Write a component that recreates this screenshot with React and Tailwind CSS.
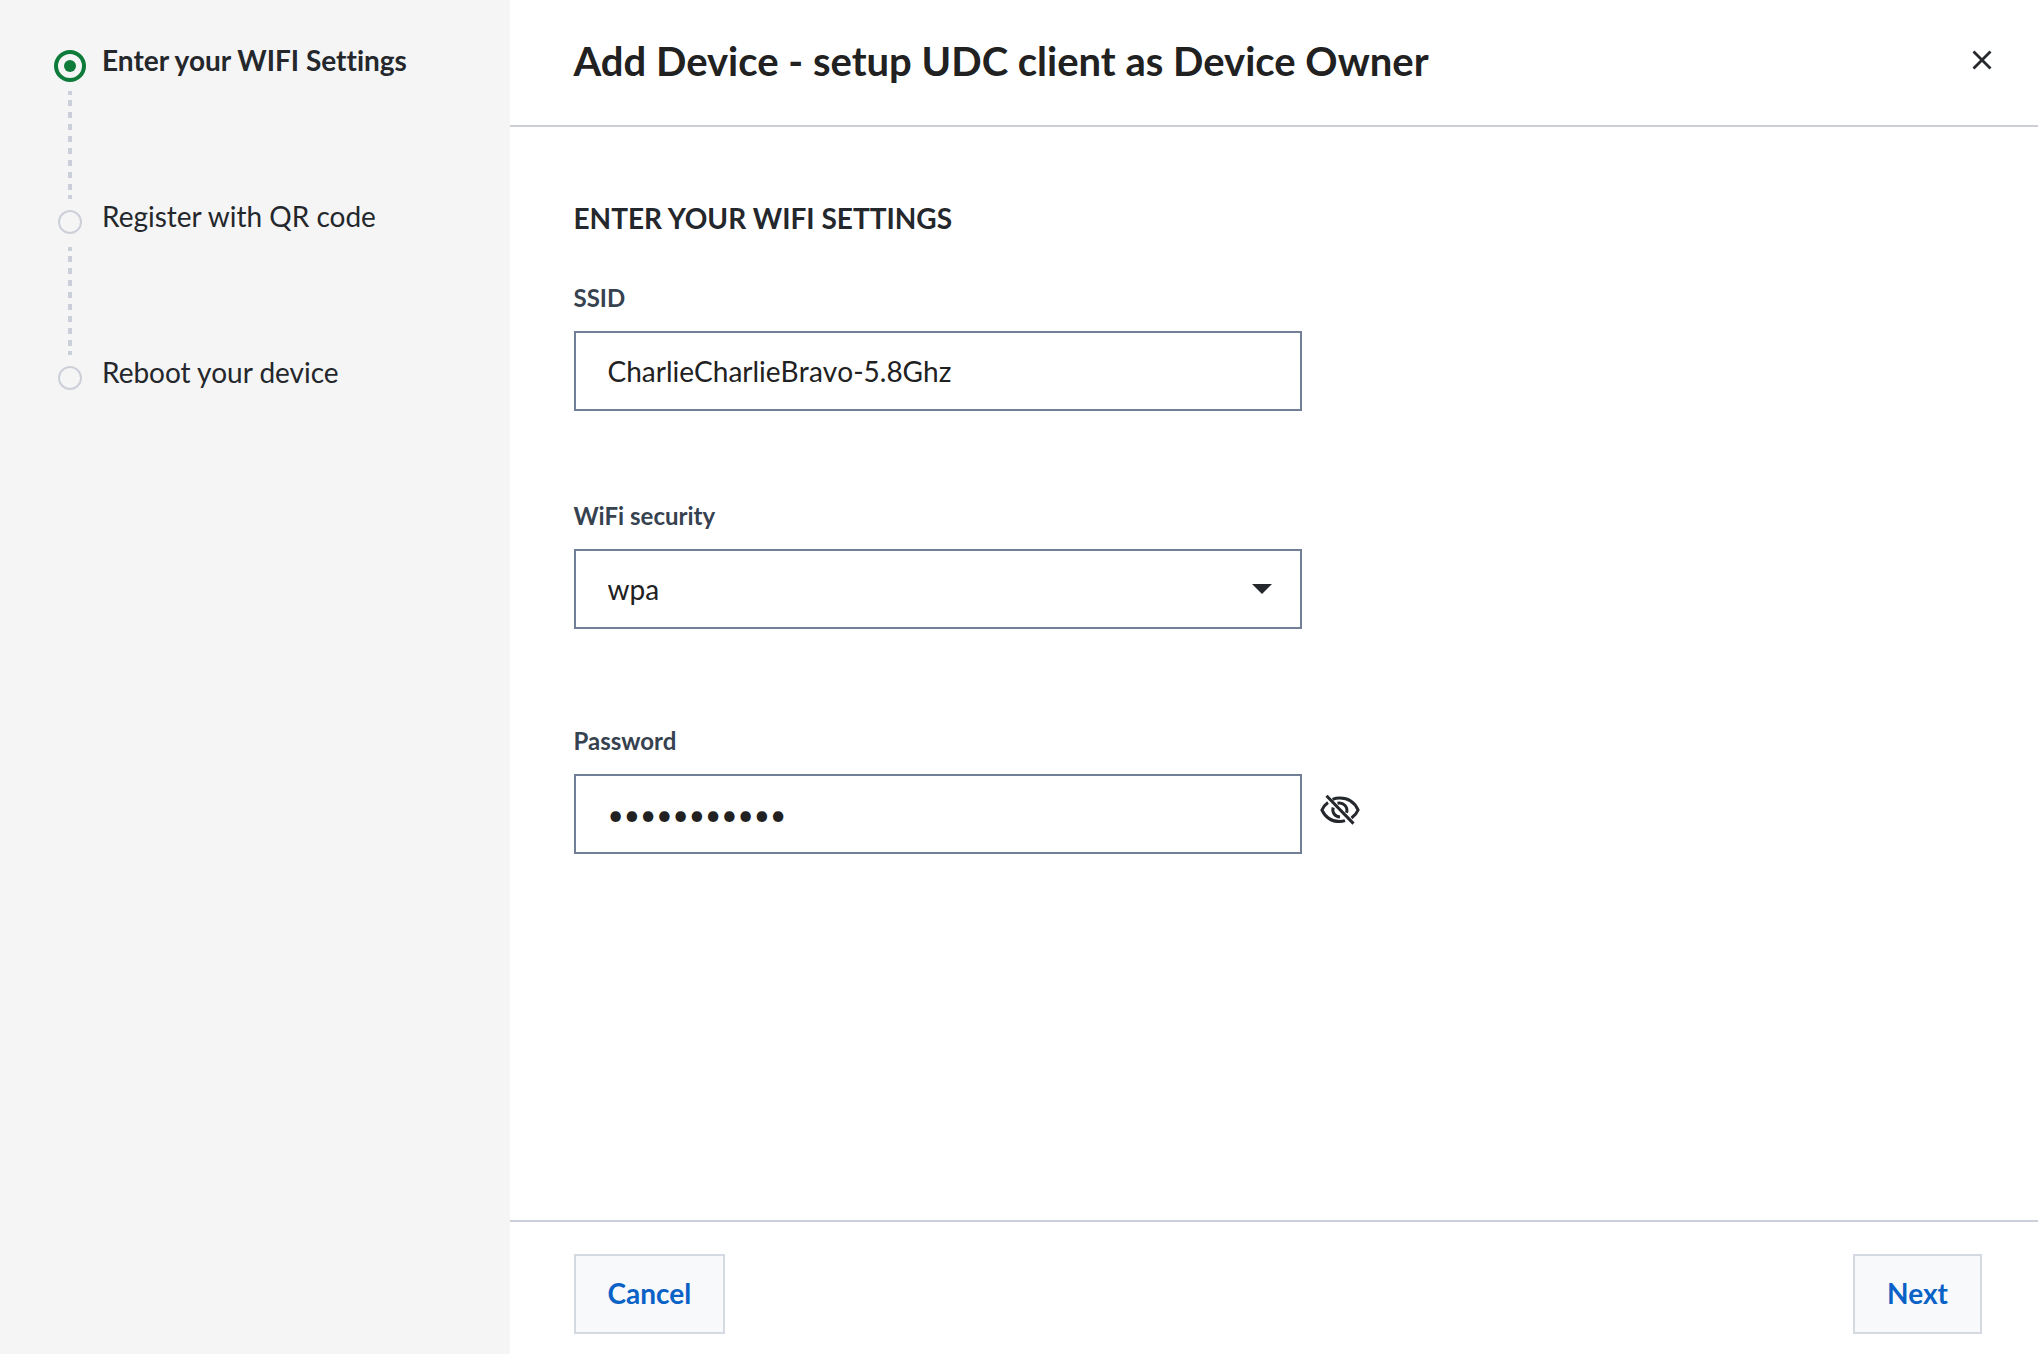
import { useState } from "react";

const STEPS = ["Enter your WIFI Settings", "Register with QR code", "Reboot your device"];

function StepMarker({ active }) {
  return active ? (
    <span className="flex size-8 items-center justify-center rounded-full border-4 border-[#0f7b3a]">
      <span className="size-3 rounded-full bg-[#0f7b3a]" />
    </span>
  ) : (
    <span className="my-1 size-6 rounded-full border-2 border-[#cdd0d9]" />
  );
}

function DottedLine() {
  return (
    <svg width="4" height="108" aria-hidden="true" className="text-[#cbcfd9]">
      <path d="M2 0V4M2 104V108" stroke="currentColor" strokeWidth="4" />
      <path d="M2 9V99" stroke="currentColor" strokeWidth="4" strokeDasharray="6 6" />
    </svg>
  );
}

function Steps() {
  return (
    <ol className="flex flex-col">
      {STEPS.map((label, i) => (
        <li key={label} className="flex h-39 gap-4" aria-current={i === 0 ? "step" : undefined}>
          <div className="flex w-8 flex-col items-center gap-[9px] pt-1.5">
            <StepMarker active={i === 0} />
            {i < STEPS.length - 1 && <DottedLine />}
          </div>
          <span className={i === 0 ? "text-[28px] leading-8 font-bold" : "text-[28px] leading-8"}>{label}</span>
        </li>
      ))}
    </ol>
  );
}

function EyeOff() {
  return (
    <svg width="40" height="32" viewBox="0 0 40 32" fill="none" stroke="currentColor" strokeWidth="3" aria-hidden="true">
      <path d="M6.5 1.8 33.5 29.6" />
      <path d="M8 8.5C5 10.7 3 13.500 1.900 16C5.500 23.500 12 27.600 19.500 27.600C21.500 27.600 23.300 27.300 25 26.700" />
      <path d="M12.500 5.300C14.700 4.500 17.300 4.100 20 4.100C28 4.100 34.700 8.800 38.100 16C37 18.700 35 21.500 31.500 24" />
      <path d="M13.200 13.500C11.700 18.500 15 22.700 20 22.900" />
      <path d="M17.500 9.300C23 7.800 28.500 13 26.500 18.800" />
    </svg>
  );
}

function Field({ id, label, children }) {
  return (
    <div className="flex flex-col gap-[17px]">
      <label htmlFor={id} className="text-2xl leading-8 font-bold text-[#36424f]">{label}</label>
      {children}
    </div>
  );
}

const CONTROL =
  "h-20 w-full appearance-none rounded-none border-2 border-[#718096] bg-white px-8 text-[28px] leading-8 text-[#212121] outline-none [font-kerning:none]";

const BUTTON =
  "h-20 border-2 border-[#d5d9e1] bg-[#f8f9fb] px-8 pb-0.5 text-[28px] leading-8 font-bold text-[#0a62c6]";

export default function App() {
  const [ssid, setSsid] = useState("CharlieCharlieBravo-5.8Ghz");
  const [security, setSecurity] = useState("wpa");
  const [password, setPassword] = useState("bravo-58ghz");
  const [visible, setVisible] = useState(false);

  return (
    <div className="flex min-h-screen bg-white font-['Lato',sans-serif] text-[#24272b] [font-variant-ligatures:none]">
      <aside className="w-1/4 shrink-0 bg-[#f5f5f5] pt-11 pl-[54px]">
        <Steps />
      </aside>

      <main className="flex min-w-0 flex-1 flex-col">
        <header className="flex items-center justify-between border-b-2 border-[#cbcdd7] pt-[37px] pr-10 pb-10 pl-16">
          <h1 className="text-[40px] leading-12 font-bold text-[#212121]">
            Add Device - setup UDC client as Device Owner
          </h1>
          <button type="button" aria-label="Close" className="flex size-8 items-center justify-center pb-0.5">
            <svg width="20" height="20" viewBox="0 0 20 20" stroke="currentColor" strokeWidth="2.8" aria-hidden="true">
              <path d="M1.500 1.500 18.500 18.500M18.500 1.500 1.500 18.500" />
            </svg>
          </button>
        </header>

        <form className="flex flex-1 flex-col px-16 pt-[75px]">
          <h2 className="text-[28px] leading-8 font-bold uppercase">Enter your WIFI settings</h2>
          <div className="mt-12 flex max-w-[728px] flex-col gap-[89px]">
            <Field id="ssid" label="SSID">
              <input id="ssid" className={CONTROL} value={ssid} onChange={(e) => setSsid(e.target.value)} />
            </Field>
            <Field id="security" label="WiFi security">
              <div className="relative">
                <select id="security" className={CONTROL} value={security} onChange={(e) => setSecurity(e.target.value)}>
                  <option>wpa</option>
                  <option>wep</option>
                  <option>none</option>
                </select>
                <svg width="20" height="10" viewBox="0 0 20 10" aria-hidden="true" className="pointer-events-none absolute top-[35px] right-[30px]">
                  <path d="M0 0H20L10 10Z" fill="currentColor" />
                </svg>
              </div>
            </Field>
            <div className="pt-[7px]">
              <Field id="password" label="Password">
                <div className="relative">
                  <input
                    id="password"
                    type={visible ? "text" : "password"}
                    className={CONTROL}
                    value={password}
                    onChange={(e) => setPassword(e.target.value)}
                  />
                  <button
                    type="button"
                    aria-label="Show password"
                    aria-pressed={visible}
                    onClick={() => setVisible(!visible)}
                    className="absolute top-5 left-full ml-[18px]"
                  >
                    <EyeOff />
                  </button>
                </div>
              </Field>
            </div>
          </div>
        </form>

        <footer className="flex items-center justify-between border-t-2 border-[#cbcfd9] pt-8 pr-14 pb-5 pl-16">
          <button type="button" className={BUTTON}>Cancel</button>
          <button type="button" className={BUTTON}>Next</button>
        </footer>
      </main>
    </div>
  );
}
